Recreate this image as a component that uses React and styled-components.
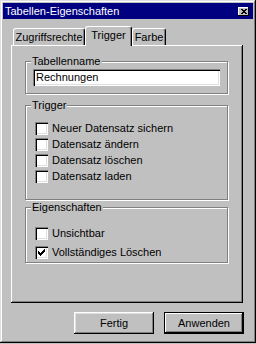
import React from "react";
import styled, { createGlobalStyle } from "styled-components";

const GlobalStyle = createGlobalStyle`
  html, body {
    margin: 0;
    padding: 0;
    background: #c0c0c0;
  }
  body {
    font-family: "Liberation Sans", Arial, sans-serif;
    font-size: 11px;
    color: #000;
  }
`;

const Window = styled.div`
  box-sizing: border-box;
  width: 256px;
  height: 343px;
  padding: 3px;
  background: #c0c0c0;
  box-shadow: inset -1px -1px #000, inset 1px 1px #dfdfdf,
    inset -2px -2px #808080, inset 2px 2px #fff;
  display: flex;
  flex-direction: column;
`;

const TitleBar = styled.div`
  height: 16px;
  background: #000080;
  color: #fff;
  display: flex;
  align-items: center;
  justify-content: space-between;
  padding: 0 4px 0 2px;
  font-size: 11px;
  line-height: 13px;
`;

const CloseButton = styled.div`
  box-sizing: border-box;
  width: 11px;
  height: 9px;
  background: #c0c0c0;
  box-shadow: inset -1px -1px #000, inset 1px 1px #fff;
  display: flex;
  align-items: center;
  justify-content: center;
  margin-top: 1px;
`;

const Body = styled.div`
  margin: 7px 10px 0 8px;
`;

const TabRow = styled.div`
  display: flex;
  align-items: flex-end;
  height: 19px;
  padding-left: 2px;
  position: relative;
  z-index: 1;
`;

const Tab = styled.div`
  box-sizing: border-box;
  width: ${(p) => p.$w}px;
  height: ${(p) => (p.$active ? 20 : 17)}px;
  margin-bottom: ${(p) => (p.$active ? -1 : 0)}px;
  background: #c0c0c0;
  border-top: 1px solid #fff;
  border-left: 1px solid #fff;
  border-right: 1px solid #000;
  border-radius: 3px 3px 0 0;
  box-shadow: inset -1px 0 #808080;
  display: flex;
  justify-content: center;
  padding-top: ${(p) => (p.$active ? 2 : 2)}px;
  line-height: 13px;
`;

const Panel = styled.div`
  box-sizing: border-box;
  height: 258px;
  padding: 10px 15px 0 14px;
  background: #c0c0c0;
  box-shadow: inset -1px -1px #000, inset 1px 1px #fff, inset -2px -2px #808080;
`;

const Group = styled.fieldset`
  margin: ${(p) => p.$top || 0}px 0 0 0;
  padding: ${(p) => p.$pt}px 0 ${(p) => p.$pb}px 0;
  min-width: 0;
  border: 1px solid #808080;
  box-shadow: inset 1px 1px #fff, 1px 1px #fff;
`;

const Legend = styled.legend`
  margin-left: 5px;
  padding: 0 1px;
  background: #c0c0c0;
  line-height: 13px;
  font-size: 11px;
`;

const TextField = styled.div`
  box-sizing: border-box;
  margin: 0 7px 0 7px;
  height: 17px;
  padding: 2px 3px 0;
  background: #fff;
  box-shadow: inset 1px 1px #808080, inset 2px 2px #000,
    inset -1px -1px #fff, inset -2px -2px #dfdfdf;
  line-height: 13px;
  font-size: 11px;
`;

const Row = styled.label`
  display: flex;
  align-items: center;
  gap: 4px;
  height: ${(p) => p.$h}px;
  padding-left: 9px;
  line-height: 13px;
`;

const Box = styled.span`
  box-sizing: border-box;
  flex: 0 0 13px;
  width: 13px;
  height: 13px;
  background: #fff;
  box-shadow: inset 1px 1px #808080, inset 2px 2px #000,
    inset -1px -1px #fff, inset -2px -2px #dfdfdf;
  display: flex;
  align-items: center;
  justify-content: center;
`;

const ButtonRow = styled.div`
  display: flex;
  justify-content: flex-end;
  gap: 10px;
  margin: 9px 9px 0 0;
`;

const Button = styled.div`
  box-sizing: border-box;
  width: 80px;
  height: 22px;
  display: flex;
  align-items: center;
  justify-content: center;
  background: #c0c0c0;
  border: ${(p) => (p.$default ? "1px solid #000" : "none")};
  box-shadow: inset -1px -1px #000, inset 1px 1px #fff,
    inset -2px -2px #808080, inset 2px 2px #dfdfdf;
  ${(p) =>
    p.$default &&
    "box-shadow: inset -1px -1px #000, inset 1px 1px #fff, inset -2px -2px #808080;"}
  font-size: 11px;
`;

const pixels = (rows) =>
  rows.flatMap((r, y) =>
    r.split("").map((c, x) => (c === "#" ? <rect key={`${x}-${y}`} x={x} y={y} width="1" height="1" /> : null))
  );

const CloseGlyph = () => (
  <svg width="6" height="5" viewBox="0 0 6 5" shapeRendering="crispEdges" fill="#000">
    {pixels(["##..##", ".####.", "..##..", ".####.", "##..##"])}
  </svg>
);

const CheckGlyph = () => (
  <svg width="7" height="7" viewBox="0 0 7 7" shapeRendering="crispEdges" fill="#000">
    {pixels(["......#", ".....##", "#...###", "##.###.", "#####..", ".###...", "..#...."])}
  </svg>
);

const Check = ({ label, checked, h }) => (
  <Row $h={h}>
    <Box>{checked && <CheckGlyph />}</Box>
    <span>{label}</span>
  </Row>
);

export default function App() {
  return (
    <>
      <GlobalStyle />
      <Window>
        <TitleBar>
          <span>Tabellen-Eigenschaften</span>
          <CloseButton>
            <CloseGlyph />
          </CloseButton>
        </TitleBar>
        <Body>
          <TabRow>
            <Tab $w={72}>Zugriffsrechte</Tab>
            <Tab $w={47} $active>Trigger</Tab>
            <Tab $w={34}>Farbe</Tab>
          </TabRow>
          <Panel>
            <Group $pt={1} $pb={7}>
              <Legend>Tabellenname</Legend>
              <TextField>Rechnungen</TextField>
            </Group>
            <Group $top={5} $pt={8} $pb={15}>
              <Legend>Trigger</Legend>
              <Check h={16} label="Neuer Datensatz sichern" />
              <Check h={16} label="Datensatz ändern" />
              <Check h={16} label="Datensatz löschen" />
              <Check h={16} label="Datensatz laden" />
            </Group>
            <Group $top={1} $pt={10} $pb={0}>
              <Legend>Eigenschaften</Legend>
              <Check h={19} label="Unsichtbar" />
              <Check h={19} label="Vollständiges Löschen" checked />
            </Group>
          </Panel>
        </Body>
        <ButtonRow>
          <Button>Fertig</Button>
          <Button $default>Anwenden</Button>
        </ButtonRow>
      </Window>
    </>
  );
}
